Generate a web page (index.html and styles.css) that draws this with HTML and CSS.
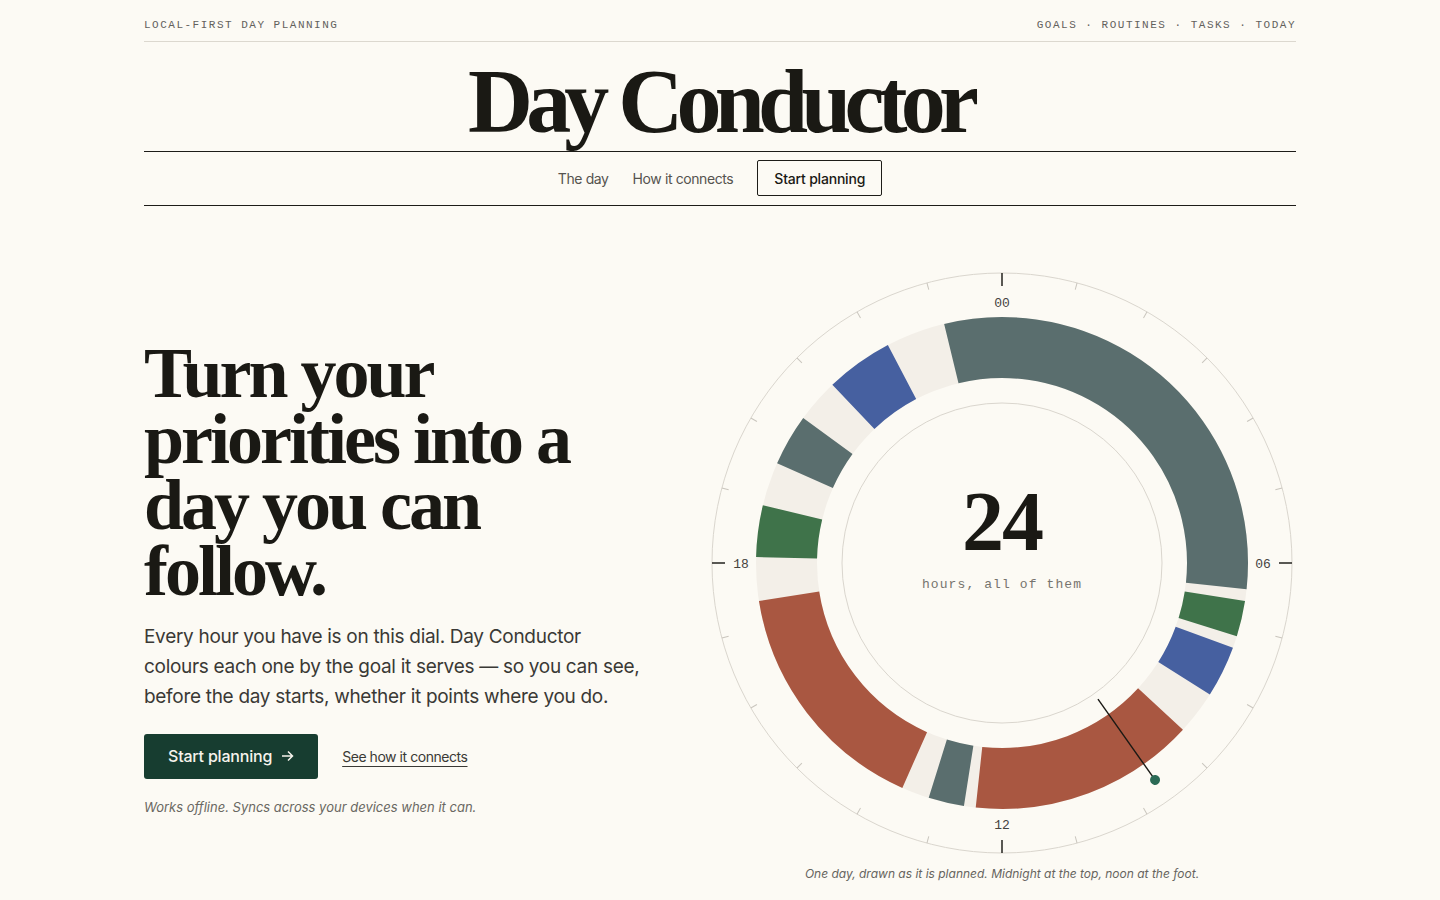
FILE: index.html
```html
<!DOCTYPE html>
<html lang="en">
<head>
<meta charset="utf-8">
<title>Day Conductor</title>
<link rel="stylesheet" href="styles.css">
</head>
<body>
<div class="page">
  <header class="topbar">
    <span class="eyebrow">LOCAL-FIRST DAY PLANNING</span>
    <span class="sections">GOALS · ROUTINES · TASKS · TODAY</span>
  </header>
  <div class="masthead">
    <h1 class="brand">Day Conductor</h1>
  </div>
  <nav class="mainnav">
    <a class="nav-link" href="#day">The day</a>
    <a class="nav-link" href="#connects">How it connects</a>
    <a class="nav-cta" href="#start">Start planning</a>
  </nav>
  <main class="hero">
    <div class="hero-copy">
      <h2 class="hero-title">Turn your<br>priorities into a<br>day you can<br>follow.</h2>
      <p class="hero-lede">Every hour you have is on this dial. Day Conductor colours each one by the goal it serves — so you can see, before the day starts, whether it points where you do.</p>
      <div class="hero-actions">
        <a class="btn-primary" href="#start">Start planning
          <svg class="btn-arrow" width="13" height="12" viewBox="0 0 13 12"><path d="M1 6h10.5M7 1.5 11.5 6 7 10.5" fill="none" stroke="currentColor" stroke-width="1.5"/></svg>
        </a>
        <a class="link-secondary" href="#connects">See how it connects</a>
      </div>
      <p class="hero-note">Works offline. Syncs across your devices when it can.</p>
    </div>
    <figure class="dial">
      <svg class="dial-svg" width="580" height="580" viewBox="0 0 580 580">
        <circle class="dial-outer" cx="290" cy="290" r="290"/>
        <g class="ticks-minor">
          <line x1="290" y1="0" x2="290" y2="7" transform="rotate(15 290 290)"/>
          <line x1="290" y1="0" x2="290" y2="7" transform="rotate(30 290 290)"/>
          <line x1="290" y1="0" x2="290" y2="7" transform="rotate(45 290 290)"/>
          <line x1="290" y1="0" x2="290" y2="7" transform="rotate(60 290 290)"/>
          <line x1="290" y1="0" x2="290" y2="7" transform="rotate(75 290 290)"/>
          <line x1="290" y1="0" x2="290" y2="7" transform="rotate(105 290 290)"/>
          <line x1="290" y1="0" x2="290" y2="7" transform="rotate(120 290 290)"/>
          <line x1="290" y1="0" x2="290" y2="7" transform="rotate(135 290 290)"/>
          <line x1="290" y1="0" x2="290" y2="7" transform="rotate(150 290 290)"/>
          <line x1="290" y1="0" x2="290" y2="7" transform="rotate(165 290 290)"/>
          <line x1="290" y1="0" x2="290" y2="7" transform="rotate(195 290 290)"/>
          <line x1="290" y1="0" x2="290" y2="7" transform="rotate(210 290 290)"/>
          <line x1="290" y1="0" x2="290" y2="7" transform="rotate(225 290 290)"/>
          <line x1="290" y1="0" x2="290" y2="7" transform="rotate(240 290 290)"/>
          <line x1="290" y1="0" x2="290" y2="7" transform="rotate(255 290 290)"/>
          <line x1="290" y1="0" x2="290" y2="7" transform="rotate(285 290 290)"/>
          <line x1="290" y1="0" x2="290" y2="7" transform="rotate(300 290 290)"/>
          <line x1="290" y1="0" x2="290" y2="7" transform="rotate(315 290 290)"/>
          <line x1="290" y1="0" x2="290" y2="7" transform="rotate(330 290 290)"/>
          <line x1="290" y1="0" x2="290" y2="7" transform="rotate(345 290 290)"/>
        </g>
        <g class="ticks-major">
          <line x1="290" y1="0" x2="290" y2="13"/>
          <line x1="290" y1="0" x2="290" y2="13" transform="rotate(90 290 290)"/>
          <line x1="290" y1="0" x2="290" y2="13" transform="rotate(180 290 290)"/>
          <line x1="290" y1="0" x2="290" y2="13" transform="rotate(270 290 290)"/>
        </g>
        <g class="hour-labels">
          <text x="290" y="34">00</text>
          <text x="551" y="295">06</text>
          <text x="290" y="556">12</text>
          <text x="29" y="295">18</text>
        </g>
        <circle class="ring-base" cx="290" cy="290" r="215.5"/>
        <g class="ring-blocks">
          <circle class="blk blk-slate" cx="290" cy="290" r="215.5" stroke-dasharray="412.6 1400" transform="rotate(-103.6 290 290)"/>
          <circle class="blk blk-green" cx="290" cy="290" r="215.5" stroke-dasharray="31.78 1400" transform="rotate(8.9 290 290)"/>
          <circle class="blk blk-blue" cx="290" cy="290" r="215.5" stroke-dasharray="45.89 1400" transform="rotate(20.15 290 290)"/>
          <circle class="blk blk-red" cx="290" cy="290" r="215.5" stroke-dasharray="201.04 1400" transform="rotate(42.65 290 290)"/>
          <circle class="blk blk-slate" cx="290" cy="290" r="215.5" stroke-dasharray="31.78 1400" transform="rotate(98.9 290 290)"/>
          <circle class="blk blk-red" cx="290" cy="290" r="215.5" stroke-dasharray="215.14 1400" transform="rotate(113.9 290 290)"/>
          <circle class="blk blk-green" cx="290" cy="290" r="215.5" stroke-dasharray="45.89 1400" transform="rotate(181.4 290 290)"/>
          <circle class="blk blk-slate" cx="290" cy="290" r="215.5" stroke-dasharray="45.89 1400" transform="rotate(203.9 290 290)"/>
          <circle class="blk blk-blue" cx="290" cy="290" r="215.5" stroke-dasharray="59.99 1400" transform="rotate(226.4 290 290)"/>
        </g>
        <circle class="dial-inner" cx="290" cy="290" r="160"/>
        <text class="dial-count" x="290" y="277">24</text>
        <text class="dial-unit" x="290" y="315">hours, all of them</text>
        <g class="needle" transform="rotate(144.8 290 290)">
          <line x1="290" y1="123.5" x2="290" y2="24.5"/>
          <circle cx="290" cy="24.5" r="5"/>
        </g>
      </svg>
      <figcaption class="dial-caption">One day, drawn as it is planned. Midnight at the top, noon at the foot.</figcaption>
    </figure>
  </main>
</div>
</body>
</html>
```

FILE: styles.css
```css
* { box-sizing: border-box; }

html, body {
  margin: 0;
  background: #fcfaf4;
  color: #1b1a16;
}

body {
  font-family: Inter, "Noto Sans", sans-serif;
}

a { color: inherit; text-decoration: none; }

.page {
  width: 1152px;
  margin: 0 auto;
}

.topbar {
  display: flex;
  justify-content: space-between;
  align-items: center;
  padding: 18px 0 9px;
  border-bottom: 1px solid #dcd8cf;
  font-family: "Liberation Mono", monospace;
  font-size: 11px;
  line-height: 14px;
  letter-spacing: 1.5px;
  color: #63615c;
}

.masthead {
  padding: 15px 0 4px;
  border-bottom: 1px solid #1d1c18;
  text-align: center;
}

.brand {
  margin: 0;
  font-family: "Liberation Serif", serif;
  font-weight: 700;
  font-size: 90px;
  line-height: 90px;
  letter-spacing: -6.8px;
  color: #1a1914;
}

.mainnav {
  display: flex;
  justify-content: center;
  align-items: center;
  gap: 24px;
  padding: 8px 0 9px;
  border-bottom: 1px solid #1d1c18;
}

.nav-link {
  font-size: 14px;
  letter-spacing: -0.4px;
  color: #55534e;
}

.nav-cta {
  display: flex;
  align-items: center;
  height: 36px;
  padding: 0 16px;
  border: 1px solid #1d1c18;
  border-radius: 2px;
  font-size: 14px;
  font-weight: 500;
  letter-spacing: -0.2px;
  color: #1a1914;
}

.hero {
  display: grid;
  grid-template-columns: 1fr 588px;
  align-items: center;
  padding-top: 67px;
}

.hero-title {
  margin: 0;
  font-family: "Liberation Serif", serif;
  font-weight: 700;
  font-size: 72px;
  line-height: 66px;
  letter-spacing: -3px;
  color: #1a1914;
}

.hero-lede {
  margin: 18px 0 0;
  max-width: 500px;
  font-size: 19px;
  line-height: 30px;
  letter-spacing: -0.3px;
  color: #3a3935;
}

.hero-actions {
  display: flex;
  align-items: center;
  gap: 24px;
  margin-top: 22px;
}

.btn-primary {
  display: flex;
  align-items: center;
  gap: 9px;
  height: 45px;
  padding: 0 24px;
  background: #173d30;
  border-radius: 3px;
  color: #f6f3ec;
  font-size: 16px;
  font-weight: 500;
  letter-spacing: -0.2px;
}

.btn-arrow { display: block; }

.link-secondary {
  font-size: 14px;
  letter-spacing: -0.45px;
  color: #3a3935;
  text-decoration: underline;
  text-underline-offset: 4px;
  text-decoration-thickness: 1px;
}

.hero-note {
  margin: 18px 0 0;
  font-size: 13px;
  line-height: 20px;
  font-style: italic;
  color: #6a6862;
}

.dial {
  margin: 0;
  display: flex;
  flex-direction: column;
  align-items: center;
}

.dial-svg {
  display: block;
  overflow: visible;
}

.dial-outer, .dial-inner {
  fill: none;
  stroke: #dad6ce;
  stroke-width: 1;
}

.ticks-minor line {
  stroke: #c9c5bd;
  stroke-width: 1;
}

.ticks-major line {
  stroke: #23221e;
  stroke-width: 1.5;
}

.hour-labels text {
  font-family: "Liberation Mono", monospace;
  font-size: 13px;
  fill: #45433f;
  text-anchor: middle;
}

.ring-base {
  fill: none;
  stroke: #f3efe8;
  stroke-width: 61;
}

.blk {
  fill: none;
  stroke-width: 61;
}

.blk-slate { stroke: #5a6e6e; }
.blk-green { stroke: #3f734a; }
.blk-blue { stroke: #4660a0; }
.blk-red { stroke: #a95741; }

.dial-count {
  font-family: "Liberation Serif", serif;
  font-weight: 700;
  font-size: 84px;
  letter-spacing: -2px;
  fill: #1a1914;
  text-anchor: middle;
}

.dial-unit {
  font-family: "Liberation Mono", monospace;
  font-size: 13px;
  letter-spacing: 1.1px;
  fill: #77746e;
  text-anchor: middle;
}

.needle line {
  stroke: #1a1914;
  stroke-width: 1.4;
}

.needle circle {
  fill: #2b6a55;
}

.dial-caption {
  margin-top: 12px;
  font-size: 12px;
  line-height: 18px;
  font-style: italic;
  color: #66645e;
}
```
